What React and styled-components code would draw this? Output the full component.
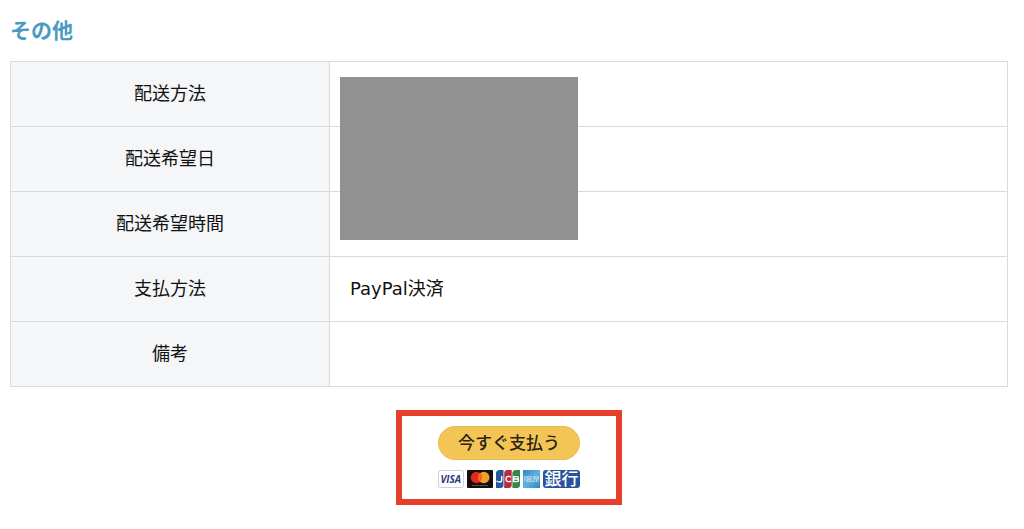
import React from 'react';
import styled, { createGlobalStyle } from 'styled-components';

const rows = [
  { label: '配送方法', masked: true },
  { label: '配送希望日' },
  { label: '配送希望時間' },
  { label: '支払方法', value: 'PayPal決済' },
  { label: '備考' },
];

export default function App() {
  return (
    <>
      <GlobalStyle />
      <Page>
        <Heading>その他</Heading>
        <Table>
          <tbody>
            {rows.map((row) => (
              <tr key={row.label}>
                <Label scope="row">{row.label}</Label>
                <Value>
                  {row.value}
                  {row.masked && <Mask />}
                </Value>
              </tr>
            ))}
          </tbody>
        </Table>
        <Payment>
          <PayButton type="button">今すぐ支払う</PayButton>
          <Cards>
            <Visa />
            <Mastercard />
            <Jcb />
            <Amex />
            <Bank>銀行</Bank>
          </Cards>
        </Payment>
      </Page>
    </>
  );
}

function Visa() {
  return (
    <svg width="26" height="18" viewBox="0 0 26 18" role="img" aria-label="VISA">
      <rect x="0.5" y="0.5" width="25" height="17" rx="2" fill="#fff" stroke="#cdcfd6" />
      <text
        x="12.8"
        y="13"
        textAnchor="middle"
        fontFamily="'Open Sans', sans-serif"
        fontSize="10"
        fontWeight="700"
        fontStyle="italic"
        fill="#2d3a85"
      >
        VISA
      </text>
    </svg>
  );
}

function Mastercard() {
  return (
    <svg width="26" height="18" viewBox="0 0 26 18" role="img" aria-label="Mastercard">
      <rect width="26" height="18" rx="1" fill="#160f10" />
      <circle cx="9.5" cy="7.5" r="5.7" fill="#e4281f" />
      <circle cx="16.8" cy="7.5" r="5.7" fill="#f3a029" />
      <path d="M13.15 3.1a5.7 5.7 0 0 1 0 8.8a5.7 5.7 0 0 1 0-8.8z" fill="#f4661f" />
      <path d="M5 15.5h16" stroke="#6d6869" strokeWidth="1.2" strokeDasharray="1.4 0.5" />
    </svg>
  );
}

function Jcb() {
  return (
    <svg width="24" height="18" viewBox="0 0 24 18" role="img" aria-label="JCB">
      <path d="M3.5 0H7.5V15a3 3 0 0 1-3 3H0V3.5A3.5 3.5 0 0 1 3.5 0z" fill="#28569b" />
      <path d="M11.5 0H15.7V15a3 3 0 0 1-3 3H8.2V3.5A3.4 3.4 0 0 1 11.5 0z" fill="#b92c40" />
      <path d="M19.7 0H24V15a3 3 0 0 1-3 3H16.4V3.5A3.4 3.4 0 0 1 19.7 0z" fill="#36864a" />
      <g fill="none" stroke="#fff" strokeWidth="1.4">
        <path d="M5.7 6v4.2q0 1.8-2 1.8T0.5 11" />
        <path d="M15 6.8q-5-1.4-5 2.2t5 2.3" />
        <path d="M17.6 6v6.2M17 6.6h3.6q1.8 0 1.8 1.2T20.6 9h-3M20.6 9q2 0 2 1.3t-2 1.3H17" />
      </g>
    </svg>
  );
}

function Amex() {
  return (
    <svg width="17" height="18" viewBox="0 0 17 18" role="img" aria-label="American Express">
      <defs>
        <linearGradient id="amex" x1="0" y1="0" x2="1" y2="1">
          <stop offset="0" stopColor="#2c87c3" />
          <stop offset="0.5" stopColor="#62b2df" />
          <stop offset="1" stopColor="#2885c2" />
        </linearGradient>
      </defs>
      <rect width="17" height="18" fill="url(#amex)" />
      <rect x="1" y="6" width="15" height="6" fill="#b4daee" />
      <g fill="none" stroke="#4f9bc8" strokeWidth="0.6">
        <path d="M1.8 8.5l1-2 1 2M2.2 7.9h1.4M5 8.5v-2l1.2 1.3 1.2-1.3v2M10.8 6.6H9v1.9h1.8M9 7.5h1.6M12.2 6.5l2.4 2M14.6 6.5l-2.4 2" />
        <path d="M3.8 9.6H2v1.9h1.8M2 10.5h1.6M5 9.5l2 2M7 9.5l-2 2M8.4 11.5v-2h1.3v1.1H8.4M12.5 9.6h-1.4v.9h1.4v1H11M15.5 9.6h-1.4v.9h1.4v1H14" />
      </g>
    </svg>
  );
}

const GlobalStyle = createGlobalStyle`
  * {
    box-sizing: border-box;
  }

  body {
    margin: 0;
    background: #fff;
    color: #111;
    font-family: 'DejaVu Sans', 'Noto Sans CJK JP', sans-serif;
    font-size: 18px;
    line-height: 24px;
  }
`;

const Page = styled.main`
  display: flex;
  flex-direction: column;
  align-items: center;
  padding: 15px 16px 24px 10px;
`;

const Heading = styled.h2`
  align-self: flex-start;
  margin: 0 0 18px;
  color: #4a9ac4;
  font-family: 'Noto Sans CJK JP', sans-serif;
  font-size: 21px;
  font-weight: 700;
  line-height: 28px;
`;

const Table = styled.table`
  width: 100%;
  table-layout: fixed;
  border-collapse: collapse;
`;

const Label = styled.th`
  width: 32%;
  height: 65px;
  padding: 0 20px;
  border: 1px solid #d9dadc;
  background: #f5f6f8;
  font-weight: 400;
  text-align: center;
`;

const Value = styled.td`
  position: relative;
  padding: 0 20px;
  border: 1px solid #d9dadc;
`;

/* covers the values of the first three rows */
const Mask = styled.div`
  position: absolute;
  z-index: 1;
  top: 15px;
  left: 10px;
  width: 238px;
  height: 163px;
  background: #919191;
`;

const Payment = styled.section`
  display: flex;
  flex-direction: column;
  align-items: center;
  gap: 10px;
  margin-top: 23px;
  padding: 10px 36px 11px;
  border: 6px solid #e5402a;
`;

const PayButton = styled.button`
  width: 142px;
  height: 34px;
  padding: 0;
  border: 1px solid #e8bb50;
  border-radius: 17px;
  background: #f3c556;
  color: #2b2413;
  font-family: inherit;
  font-size: 17px;
  font-weight: 500;
  line-height: 24px;
  cursor: pointer;
`;

const Cards = styled.div`
  display: flex;
  align-items: center;
  gap: 3px;
`;

const Bank = styled.span`
  width: 37px;
  height: 18px;
  border-radius: 3px;
  background: #28549d;
  color: #fff;
  font-size: 17px;
  font-weight: 500;
  line-height: 18px;
  text-align: center;
`;
